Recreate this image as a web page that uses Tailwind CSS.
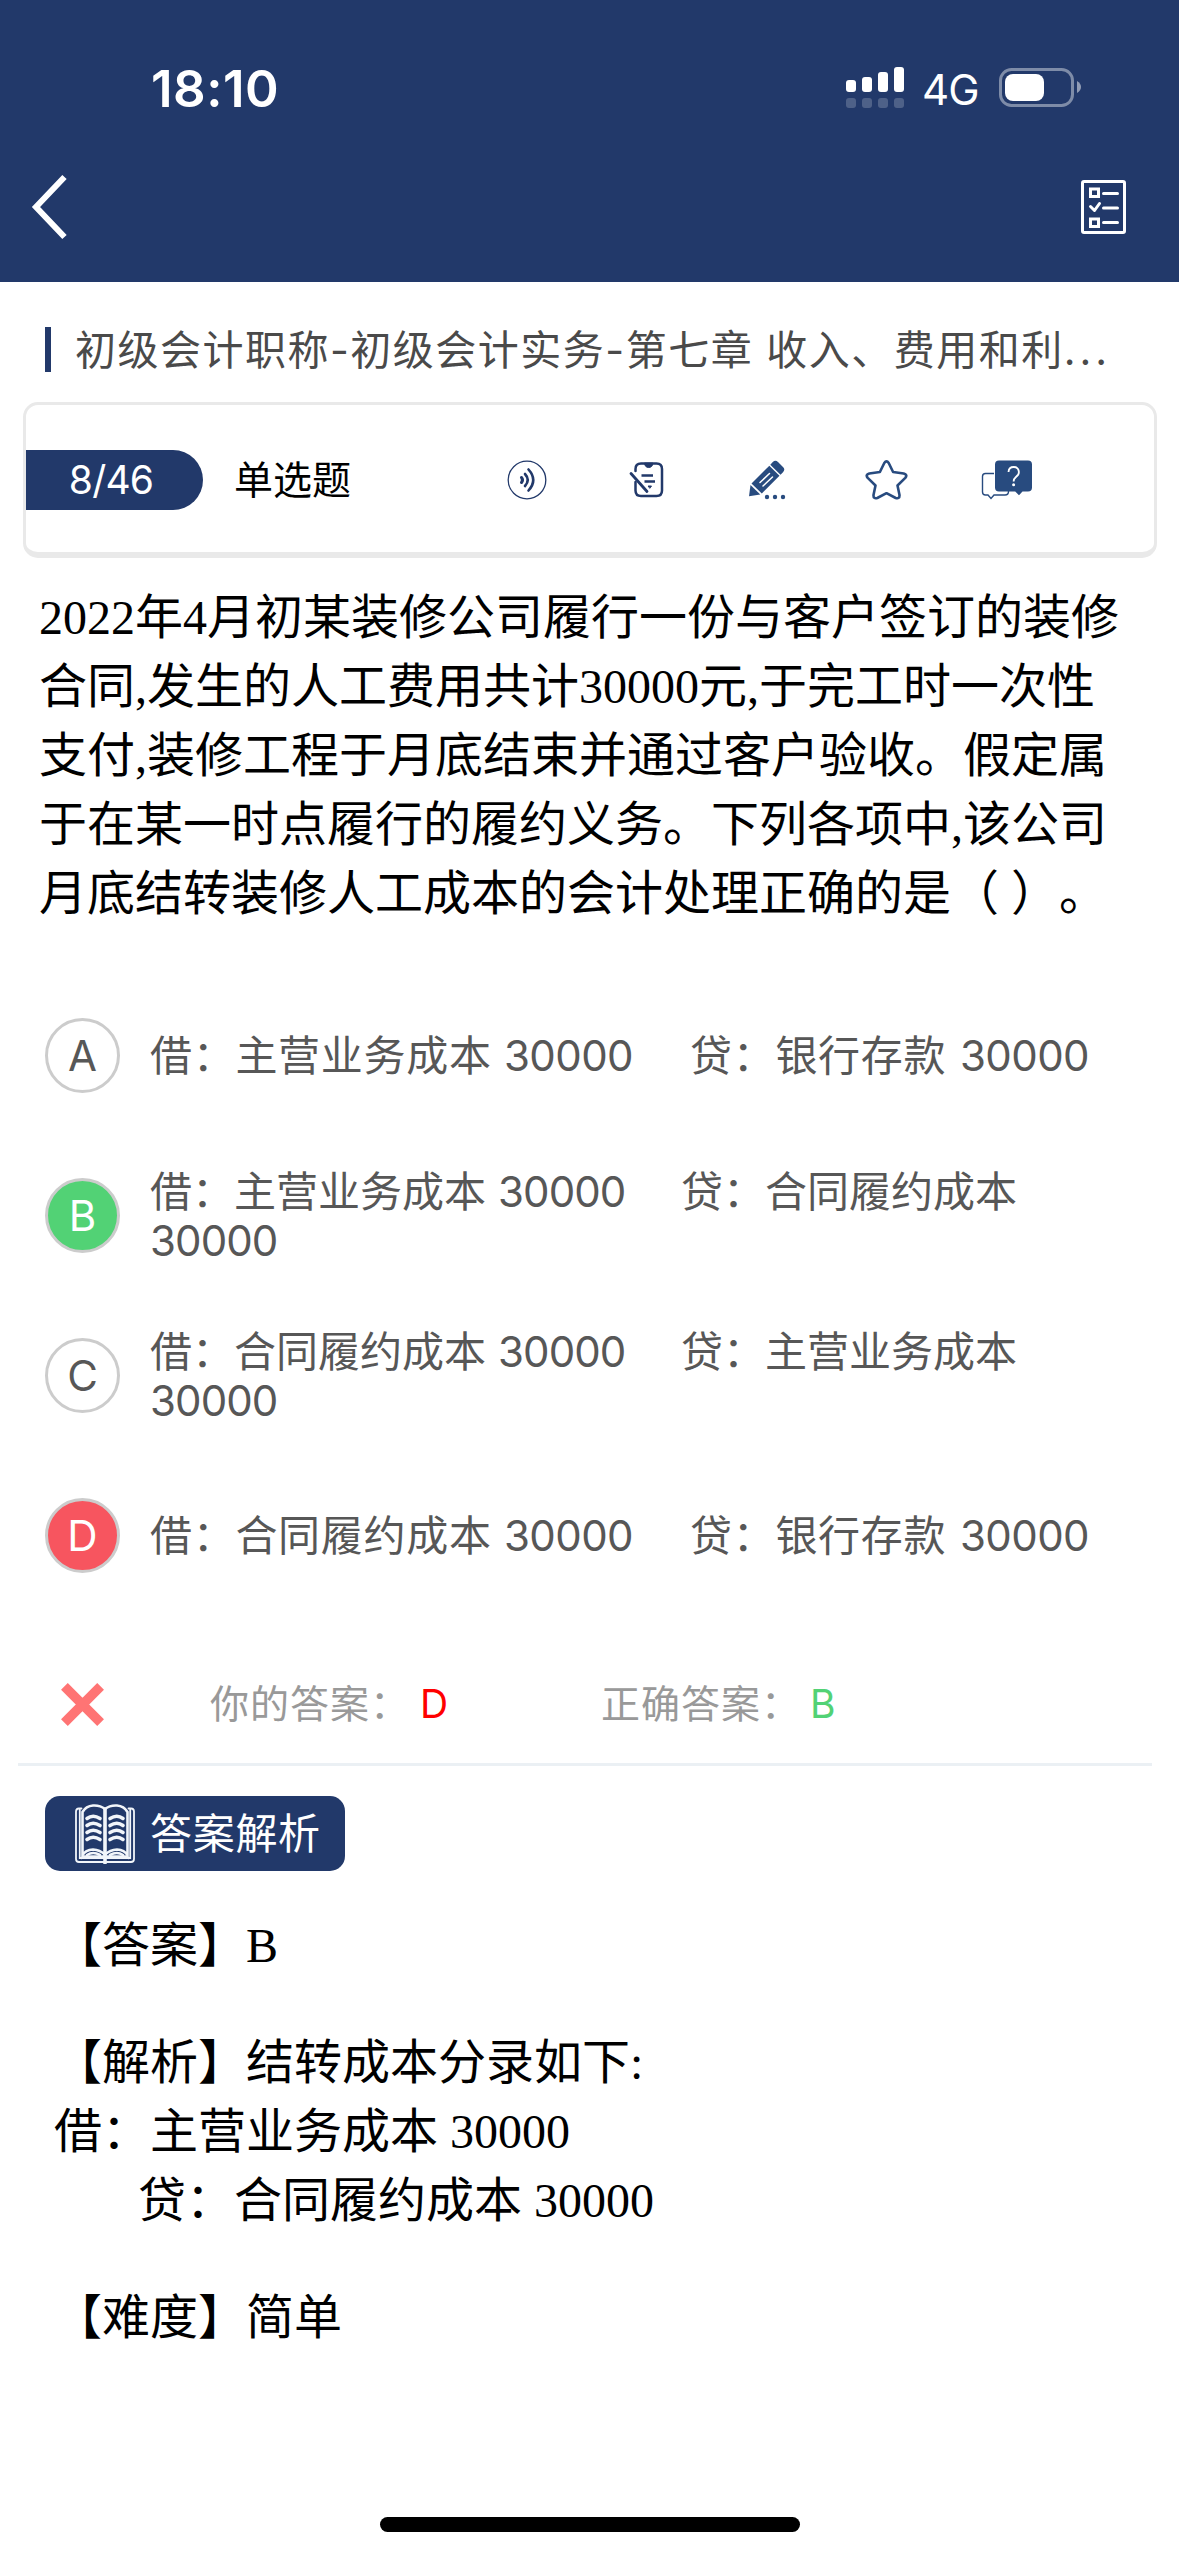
<!DOCTYPE html>
<html lang="zh-CN">
<head>
<meta charset="utf-8">
<meta name="viewport" content="width=device-width">
<title>单选题</title>
<script src="https://cdn.jsdelivr.net/npm/@tailwindcss/browser@4"></script>
</head>
<body class="bg-white">
<div class="relative flex h-[2556px] w-[1179px] flex-col overflow-hidden bg-white font-['Inter','Noto_Sans_CJK_SC',sans-serif] whitespace-nowrap [text-spacing-trim:space-all]">

  <!-- Header -->
  <header class="flex h-[282px] shrink-0 flex-col bg-[#22396a] text-white">
    <div class="flex h-[150px] items-start justify-between pt-[57px] pr-[98px] pl-[151px]">
      <span class="text-[51px] leading-[64px] font-semibold tracking-[0.500px]">18:10</span>
      <div class="flex pt-[10px]">
        <svg class="h-[42px] w-[58px]" viewBox="0 0 58 42" fill="#fff">
          <rect x="0" y="13" width="10" height="12" rx="3"/><rect x="16" y="10" width="10" height="15" rx="3"/><rect x="32" y="5" width="10" height="20" rx="3"/><rect x="48" y="0" width="10" height="25" rx="3"/>
          <g opacity=".2"><rect x="0" y="31" width="10" height="10" rx="3"/><rect x="16" y="31" width="10" height="10" rx="3"/><rect x="32" y="31" width="10" height="10" rx="3"/><rect x="48" y="31" width="10" height="10" rx="3"/></g>
        </svg>
        <span class="ml-[18px] w-[77px] text-[42px] leading-[46px] tracking-[-0.800px]">4G</span>
        <svg class="h-[42px] w-[82px]" viewBox="0 0 82 42">
          <rect x="1.5" y="2.5" width="72" height="36" rx="11" fill="none" stroke="#fff" stroke-opacity=".42" stroke-width="3"/>
          <rect x="6" y="7" width="39" height="27" rx="8" fill="#fff"/>
          <path d="M78 14q4 2.500 4 6t-4 6z" fill="#fff" fill-opacity=".5"/>
        </svg>
      </div>
    </div>
    <div class="flex items-center justify-between pr-[51px] pl-[30px]">
      <svg class="mt-[22px] h-[70px] w-[40px]" viewBox="0 0 40 70" fill="none" stroke="#fff" stroke-width="6"><path d="M34.500 5L6 35l28.500 30"/></svg>
      <svg class="mt-[22px] h-[56px] w-[47px]" viewBox="0 0 47 56" fill="none" stroke="#fff" stroke-width="3">
        <rect x="1.500" y="2.500" width="42" height="51" rx="1.500"/>
        <rect x="9.500" y="10" width="8" height="7.500"/><rect x="9.500" y="40" width="8" height="7.500"/>
        <path d="M22.500 14.500h14M22.500 29h14M22.500 43.500h14M9.500 27.500l4 4 5-7" stroke-linecap="round" stroke-linejoin="round"/>
      </svg>
    </div>
  </header>

  <!-- Chapter title -->
  <div class="flex h-[120px] shrink-0 items-center pt-[15px] pl-[45px]">
    <span class="h-[45px] w-[6px] bg-[#22396a]"></span>
    <h1 class="ml-[24px] text-[41px] leading-[60px] tracking-[1.500px] text-[#4a4a4a]">初级会计职称-初级会计实务-第七章 收入、费用和利<span class="tracking-[4px]">...</span></h1>
  </div>

  <!-- Toolbar card -->
  <div class="mx-[23px] flex h-[156px] w-[1134px] shrink-0 items-center rounded-[15px] border-[3px] border-b-[6px] border-[#e9e9e9] bg-white pt-[3px]">
    <span class="flex h-[60px] w-[177px] items-center justify-center rounded-r-full bg-[#22396a] pr-[7px] text-[39px] tracking-[-0.800px] text-white">8/46</span>
    <span class="ml-[31px] text-[39px] leading-[60px] text-black">单选题</span>
    <div class="ml-[156px] flex items-center text-[#284b7f]">
      <svg class="h-[40px] w-[40px]" viewBox="0 0 40 40" fill="none" stroke="#22396a" stroke-linecap="round">
        <circle cx="20" cy="20" r="18.800" stroke-width="1.300"/>
        <path d="M14.500 17.500q2 2.500 0 5" stroke-width="3"/><path d="M18 14q5.500 6 0 12M21.500 9.500q9.500 10.500 0 21" stroke-width="2.600"/>
      </svg>
      <svg class="ml-[82px] h-[40px] w-[36px]" viewBox="0 0 36 40" fill="none" stroke="#22396a" stroke-width="2.500" stroke-linecap="round">
        <path d="M6.500 11V9q0-5.500 5.500-5.500h15.500q5.500 0 5.500 5.500v21.500q0 5.500-5.500 5.500H12q-5.500 0-5.500-5.500V22"/>
        <path d="M15.500 3.500q.5 4 4.200 4t4.200-4z" fill="#22396a" stroke-width="1"/>
        <path d="M12.500 15.500h11.500M15.500 21.500h10.500" stroke-linecap="butt"/><path d="M2 13.500L18 31.500" stroke-width="2.800"/>
        <path d="M19.500 26h3l-1.500 2z" fill="#22396a" stroke-width="1"/>
      </svg>
      <svg class="ml-[83px] h-[40px] w-[38px]" viewBox="0 0 38 40" fill="currentColor">
        <path d="M22.300 4.800l2.500-2.800q2.600-2.600 5.200 0l5 5q2.600 2.600 0 5.200l-2.500 2.600z"/>
        <path d="M21.300 5.800l10.200 10-17.700 17.700L3.500 23.500z"/>
        <path d="M2.500 25l9.800 9.500-11.300 1.700z"/>
        <path d="M12 22.500l9.500-9M15 26l9.500-9" stroke="#fff" stroke-width="1.500" stroke-linecap="round"/>
        <circle cx="19" cy="37" r="2.200"/><circle cx="27" cy="37" r="2.200"/><circle cx="35" cy="37" r="2.200"/>
      </svg>
      <svg class="ml-[79px] h-[40px] w-[43px]" viewBox="0 0 43 40" fill="none" stroke="currentColor" stroke-width="2.600" stroke-linejoin="round">
        <path d="M19.300 3Q21.500-.200 23.700 3l4.400 9 10.600 1.500q4.200 1.200 1.600 4.400L32.500 25.500l2 9.500q.200 4.200-3.800 3L21.500 33.200 12.300 38q-4 1.200-3.800-3l2-9.500L2.700 17.900Q.100 14.700 4.300 13.500L14.900 12z"/>
      </svg>
      <svg class="ml-[73px] h-[40px] w-[51px]" viewBox="0 0 51 40">
        <path d="M13 13.500H4.500q-3 0-3 3V32q0 3 3 3H7l3 3.500 3-3.500h11q3.500 0 3.500-3.500V31" fill="none" stroke="currentColor" stroke-width="1.400"/>
        <path d="M18 .5h29q4 0 4 4v23q0 4-4 4h-5.500L38 35.200l-3.800-3.700H18q-4 0-4-4v-23q0-4 4-4z" fill="currentColor"/>
        <path d="M27.500 12q.3-5 5.200-5t5.200 5q0 3-3 5-2.300 2-2.300 4.500" fill="none" stroke="#fff" stroke-width="1.800"/><circle cx="32.600" cy="24.700" r="1.500" fill="#fff"/>
      </svg>
    </div>
  </div>

  <!-- Question -->
  <p class="mt-[25px] h-[345px] shrink-0 pl-[39px] font-['Liberation_Serif','Noto_Sans_CJK_SC',serif] text-[48px] leading-[69px] text-black">2022年4月初某装修公司履行一份与客户签订的装修<br>合同,发生的人工费用共计30000元,于完工时一次性<br>支付,装修工程于月底结束并通过客户验收。假定属<br>于在某一时点履行的履约义务。下列各项中,该公司<br>月底结转装修人工成本的会计处理正确的是（ ）。</p>

  <!-- Options -->
  <ul class="mt-[47px] flex h-[641px] shrink-0 flex-col pl-[45px] text-[42px] leading-[49px] text-[#575757]">
    <li class="flex h-[160.300px] items-center">
      <span class="flex size-[75px] items-center justify-center rounded-full border-[3px] border-[#cccccc]">A</span>
      <div class="ml-[30px] flex tracking-[0.700px]"><span class="w-[354px]">借：主营业务成本</span><span class="w-[186px] tracking-[-0.600px]">30000</span><span class="w-[270px]">贷：银行存款</span><span class="tracking-[-0.600px]">30000</span></div>
    </li>
    <li class="flex h-[160.300px] items-center">
      <span class="flex size-[75px] items-center justify-center rounded-full border-[3px] border-[#cccccc] bg-[#52d275] text-white">B</span>
      <div class="ml-[30px] flex flex-col pt-[1px]"><div class="flex"><span class="w-[348px]">借：主营业务成本</span><span class="w-[183px] tracking-[-0.900px]">30000</span><span>贷：合同履约成本</span></div><span class="tracking-[-0.900px]">30000</span></div>
    </li>
    <li class="flex h-[160.300px] items-center">
      <span class="flex size-[75px] items-center justify-center rounded-full border-[3px] border-[#cccccc]">C</span>
      <div class="ml-[30px] flex flex-col pt-[1px]"><div class="flex"><span class="w-[348px]">借：合同履约成本</span><span class="w-[183px] tracking-[-0.900px]">30000</span><span>贷：主营业务成本</span></div><span class="tracking-[-0.900px]">30000</span></div>
    </li>
    <li class="flex h-[160.300px] items-center">
      <span class="flex size-[75px] items-center justify-center rounded-full border-[3px] border-[#cccccc] bg-[#f7555f] text-white">D</span>
      <div class="ml-[30px] flex tracking-[0.700px]"><span class="w-[354px]">借：合同履约成本</span><span class="w-[186px] tracking-[-0.600px]">30000</span><span class="w-[270px]">贷：银行存款</span><span class="tracking-[-0.600px]">30000</span></div>
    </li>
  </ul>

  <!-- Result -->
  <div class="mx-[18px] mt-[27px] flex h-[123px] w-[1134px] shrink-0 items-center border-b-[3px] border-[#ebf0f4] pt-[2px] pl-[43px] text-[39px] leading-[60px] text-[#999999]">
    <svg class="h-[43px] w-[43px]" viewBox="0 0 43 43" stroke="#ff7474" stroke-width="9.500"><path d="M3.400 3.400l36.200 36.200M39.600 3.400L3.400 39.600"/></svg>
    <span class="ml-[106px] w-[210px] tracking-[1px]">你的答案：</span><span class="w-[181px] text-[#ff0000]">D</span>
    <span class="w-[209px] tracking-[1px]">正确答案：</span><span class="text-[#52d275]">B</span>
  </div>

  <!-- Explanation -->
  <div class="mt-[30px] ml-[45px] flex h-[75px] w-[300px] shrink-0 items-center rounded-[15px] bg-[#22396a] pl-[30px] text-white">
    <svg class="h-[60px] w-[60px]" viewBox="0 0 60 60" fill="none" stroke="#f1f5fa" stroke-width="2.600" stroke-linecap="round">
      <path d="M30 5Q25 1 18 1.500 11 2 7.500 8v43q3-5 10.500-5.500Q25 46 30 50.500 35 46 42 45.500q7.500.5 10.500 5.500V8Q49 2 42 1.500 35 1 30 5z"/>
      <path d="M30 5v54" stroke-width="3.600"/>
      <path d="M6.500 4.500H4q-3 0-3 3V55q0 3 3 3h52q3 0 3-3V7.500q0-3-3-3h-2.500M4.800 6v48h50.400V6" stroke-width="1.800"/>
      <path d="M8 52.500h44" stroke-width="2.600"/><path d="M12 51q6-4 13 0M35 51q7-4 13 0"/>
      <path d="M12 14.500q6-4.500 13 0M12 21.500q6-4.500 13 0M12 28.500q6-4.500 13 0M12 35.500q6-4.500 13 0M35 14.500q7-4.500 13 0M35 21.500q7-4.500 13 0M35 28.500q7-4.500 13 0M35 35.500q7-4.500 13 0" stroke-width="3.600"/>
    </svg>
    <span class="ml-[15px] text-[42px] leading-[60px] tracking-[0.700px]">答案解析</span>
  </div>
  <div class="mt-[40px] flex shrink-0 flex-col gap-[48px] pl-[54px] font-['Liberation_Serif','Noto_Sans_CJK_SC',serif] text-[48px] leading-[69px] text-black">
    <p>【答案】B</p>
    <p>【解析】结转成本分录如下:<br>借：主营业务成本 30000<br><span class="pl-[84px]">贷：合同履约成本 30000</span></p>
    <p>【难度】简单</p>
  </div>

  <div class="absolute bottom-[24px] left-[380px] h-[15px] w-[420px] rounded-full bg-black"></div>
</div>
</body>
</html>
